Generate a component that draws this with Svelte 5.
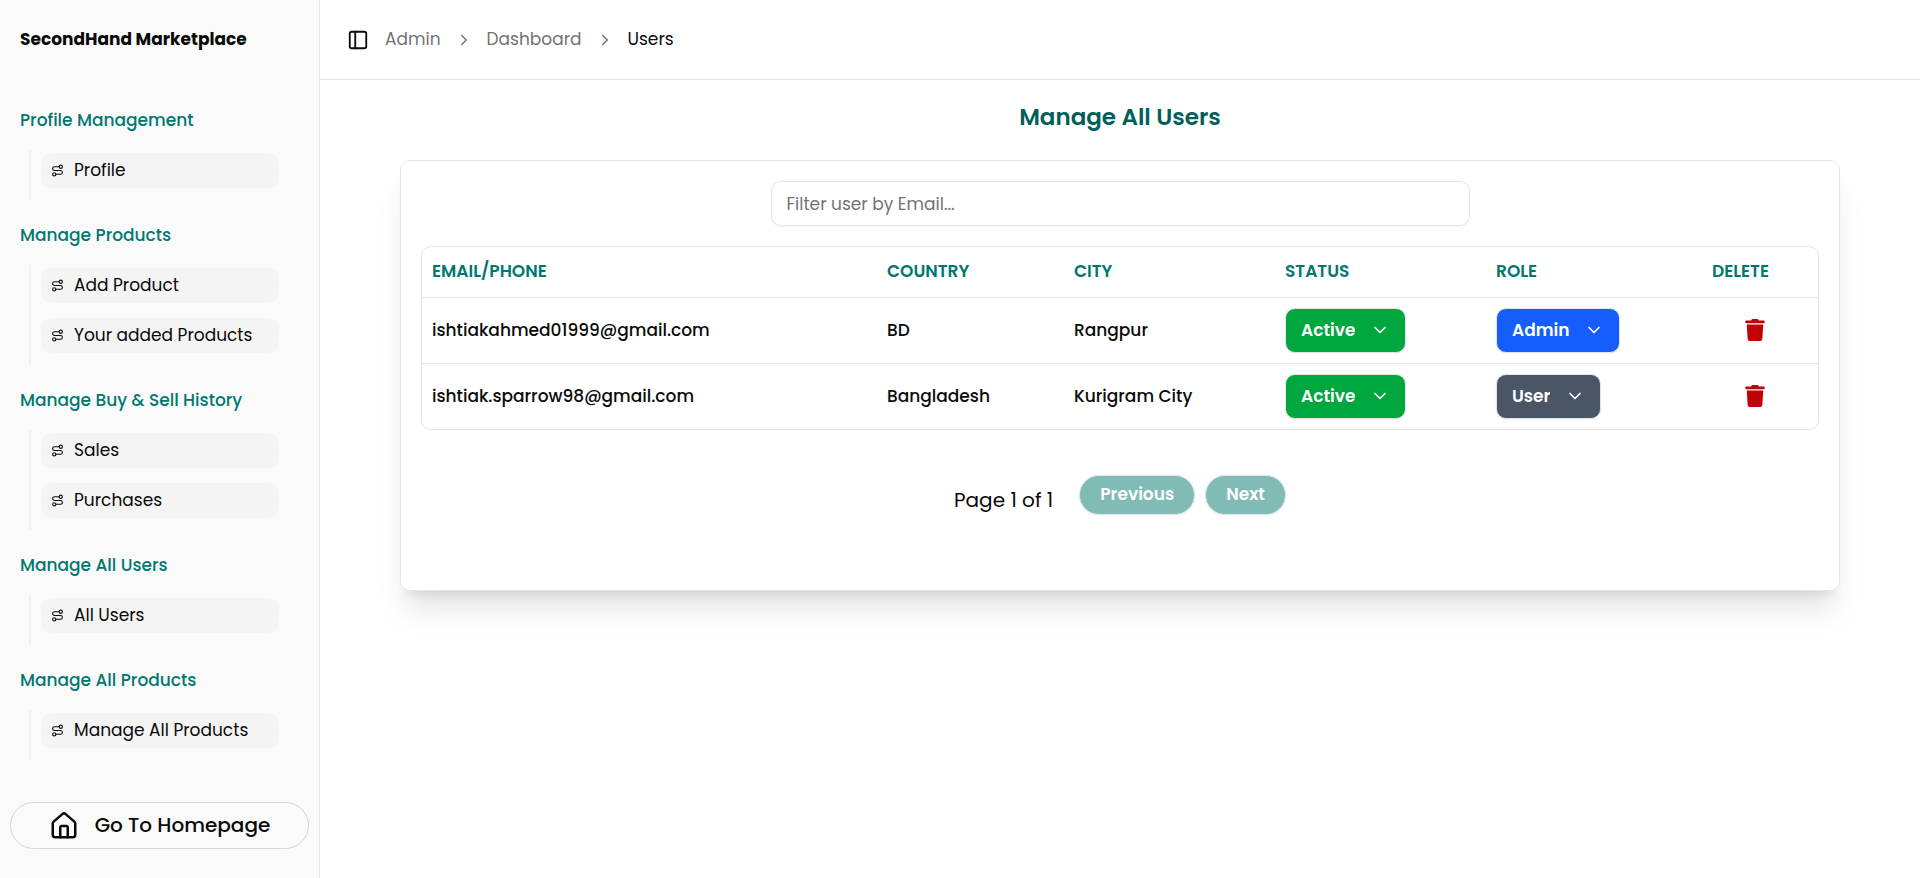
<script>
  const groups = [
    { title: 'Profile Management', items: ['Profile'] },
    { title: 'Manage Products', items: ['Add Product', 'Your added Products'] },
    { title: 'Manage Buy & Sell History', items: ['Sales', 'Purchases'] },
    { title: 'Manage All Users', items: ['All Users'] },
    { title: 'Manage All Products', items: ['Manage All Products'] }
  ];

  let users = $state([
    { email: 'ishtiakahmed01999@gmail.com', country: 'BD', city: 'Rangpur', status: 'Active', role: 'Admin' },
    { email: 'ishtiak.sparrow98@gmail.com', country: 'Bangladesh', city: 'Kurigram City', status: 'Active', role: 'User' }
  ]);
  let filter = $state('');
  let shown = $derived(users.filter((u) => u.email.includes(filter)));
</script>

{#snippet chevron()}
  <svg class="chevron" viewBox="0 0 24 24" aria-hidden="true"><path d="m6 9 6 6 6-6" /></svg>
{/snippet}

{#snippet separator()}
  <svg class="separator" viewBox="0 0 24 24" aria-hidden="true"><path d="m9 18 6-6-6-6" /></svg>
{/snippet}

<div class="layout">
  <aside>
    <a class="brand" href="#home">SecondHand Marketplace</a>
    <nav class="menu" aria-label="Sidebar">
      {#each groups as group}
        <section>
          <h2>{group.title}</h2>
          <ul>
            {#each group.items as item}
              <li>
                <a href="#{item}">
                  <svg viewBox="0 0 24 24" aria-hidden="true">
                    <circle cx="6" cy="19" r="3" />
                    <path d="M9 19h8.5a3.5 3.5 0 0 0 0-7h-11a3.5 3.5 0 0 1 0-7H15" />
                    <circle cx="18" cy="5" r="3" />
                  </svg>
                  {item}
                </a>
              </li>
            {/each}
          </ul>
        </section>
      {/each}
    </nav>
    <a class="home" href="#home">
      <svg viewBox="0 0 24 24" aria-hidden="true">
        <path d="M15 21v-8a1 1 0 0 0-1-1h-4a1 1 0 0 0-1 1v8" />
        <path d="M3 10a2 2 0 0 1 .709-1.528l7-5.999a2 2 0 0 1 2.582 0l7 5.999A2 2 0 0 1 21 10v9a2 2 0 0 1-2 2H5a2 2 0 0 1-2-2z" />
      </svg>
      Go To Homepage
    </a>
  </aside>

  <div class="page">
    <header>
      <button class="toggle" aria-label="Toggle sidebar">
        <svg viewBox="0 0 24 24" aria-hidden="true">
          <rect x="3" y="3" width="18" height="18" rx="2" />
          <path d="M9 3v18" />
        </svg>
      </button>
      <nav class="crumbs" aria-label="Breadcrumb">
        <a href="#admin">Admin</a>
        {@render separator()}
        <a href="#dashboard">Dashboard</a>
        {@render separator()}
        <span aria-current="page">Users</span>
      </nav>
    </header>

    <main>
      <h1>Manage All Users</h1>
      <div class="card">
        <input type="text" placeholder="Filter user by Email..." aria-label="Filter user by Email" bind:value={filter} />
        <div class="frame">
          <table>
            <thead>
              <tr>
                <th class="email">EMAIL/PHONE</th>
                <th class="country">COUNTRY</th>
                <th class="city">CITY</th>
                <th class="status">STATUS</th>
                <th class="role">ROLE</th>
                <th class="delete">DELETE</th>
              </tr>
            </thead>
            <tbody>
              {#each shown as user}
                <tr>
                  <td>{user.email}</td>
                  <td>{user.country}</td>
                  <td>{user.city}</td>
                  <td>
                    <div class="pick">
                      <select class="green" aria-label="Status" bind:value={user.status}>
                        <option>Active</option>
                        <option>Blocked</option>
                      </select>
                      {@render chevron()}
                    </div>
                  </td>
                  <td>
                    <div class="pick">
                      <select class={user.role === 'Admin' ? 'blue' : 'slate'} aria-label="Role" bind:value={user.role}>
                        <option>Admin</option>
                        <option>User</option>
                      </select>
                      {@render chevron()}
                    </div>
                  </td>
                  <td class="remove">
                    <button aria-label="Delete user">
                      <svg viewBox="0 0 448 512" aria-hidden="true">
                        <path d="M432 32H312l-9.4-18.7A24 24 0 0 0 281.1 0H166.8a23.72 23.72 0 0 0-21.4 13.3L136 32H16A16 16 0 0 0 0 48v32a16 16 0 0 0 16 16h416a16 16 0 0 0 16-16V48a16 16 0 0 0-16-16zM53.2 467a48 48 0 0 0 47.9 45h245.8a48 48 0 0 0 47.9-45L416 128H32z" />
                      </svg>
                    </button>
                  </td>
                </tr>
              {/each}
            </tbody>
          </table>
        </div>
        <div class="pager">
          <span>Page 1 of 1</span>
          <button disabled>Previous</button>
          <button disabled>Next</button>
        </div>
      </div>
    </main>
  </div>
</div>

<style>
  :global(body) {
    background: #fff;
  }

  .layout {
    display: flex;
    min-height: 100vh;
    font-family: Poppins, Inter, sans-serif;
    font-size: 17px;
    line-height: 25px;
    color: #0a0a0a;
  }

  .layout * {
    box-sizing: border-box;
  }

  a {
    color: inherit;
    text-decoration: none;
  }

  button,
  input,
  select {
    font: inherit;
  }

  svg {
    flex: none;
    fill: none;
    stroke: currentColor;
    stroke-width: 2;
    stroke-linecap: round;
    stroke-linejoin: round;
  }

  aside {
    display: flex;
    flex: none;
    flex-direction: column;
    width: 320px;
    padding: 0 10px 29px;
    border-right: 1px solid #e5e5e5;
    background: #fafafa;
  }

  .brand {
    padding: 27px 10px 48px;
    font-weight: 700;
  }

  .menu {
    display: flex;
    flex-direction: column;
    gap: 15px;
    padding: 0 10px;
  }

  h2 {
    margin: 0 0 10px;
    font-size: 17px;
    font-weight: 500;
    line-height: 40px;
    color: #00786f;
  }

  ul {
    margin: 0 20px 0 9px;
    padding: 0 0 0 10px;
    border-left: 2px solid #f0f0f0;
    list-style: none;
  }

  li {
    padding: 3px 0 12px;
  }

  li a {
    display: flex;
    align-items: center;
    gap: 10px;
    height: 35px;
    padding: 0 10px;
    border-radius: 10px;
    background: #f4f4f4;
    white-space: nowrap;
  }

  li svg {
    width: 13px;
    height: 13px;
  }

  .home {
    display: flex;
    align-items: center;
    justify-content: center;
    gap: 16px;
    height: 47px;
    margin-top: auto;
    border: 1px solid #d4d4d4;
    border-radius: 24px;
    font-size: 20px;
    font-weight: 500;
  }

  .home svg {
    width: 30px;
    height: 30px;
  }

  .page {
    flex: 1;
    min-width: 0;
  }

  header {
    display: flex;
    align-items: center;
    gap: 16px;
    height: 80px;
    padding: 0 27px;
    border-bottom: 1px solid #e5e5e5;
  }

  .toggle {
    display: flex;
    padding: 0;
    border: 0;
    background: none;
    color: inherit;
  }

  .toggle svg {
    width: 22px;
    height: 22px;
  }

  .crumbs {
    display: flex;
    align-items: center;
    gap: 14px;
    color: #737373;
  }

  .crumbs span {
    color: #0a0a0a;
  }

  .separator {
    width: 18px;
    height: 18px;
  }

  main {
    padding: 20px 80px;
  }

  h1 {
    margin: 0 0 25px;
    font-size: 23px;
    font-weight: 600;
    line-height: 35px;
    text-align: center;
    color: #005f5a;
  }

  .card {
    padding: 20px 20px 75px;
    border: 1px solid #e5e5e5;
    border-radius: 10px;
    box-shadow:
      0 25px 31px -6px rgba(0, 0, 0, 0.1),
      0 10px 12px -7px rgba(0, 0, 0, 0.1);
  }

  input {
    display: block;
    width: 50%;
    height: 45px;
    margin: 0 auto 20px;
    padding: 0 15px;
    border: 1px solid #e5e5e5;
    border-radius: 10px;
    background: #fff;
    box-shadow: 0 1px 2px rgba(0, 0, 0, 0.05);
    color: inherit;
  }

  input::placeholder {
    color: #737373;
  }

  .frame {
    border: 1px solid #e5e5e5;
    border-radius: 10px;
    overflow: hidden;
  }

  table {
    width: 100%;
    border-spacing: 0;
    table-layout: fixed;
  }

  th,
  td {
    padding: 0 10px;
    border-bottom: 1px solid #e5e5e5;
    text-align: left;
    white-space: nowrap;
  }

  th {
    height: 51px;
    padding-bottom: 2px;
    font-weight: 600;
    color: #00786f;
  }

  td {
    height: 66px;
    font-weight: 500;
  }

  tbody tr:last-child td {
    height: 65px;
    border-bottom: 0;
  }

  .email {
    width: 455px;
  }

  .country {
    width: 187px;
  }

  .city {
    width: 211px;
  }

  .status {
    width: 211px;
  }

  .role {
    width: 216px;
  }

  .pick {
    display: inline-flex;
    position: relative;
    vertical-align: middle;
    color: #fff;
  }

  .pick select {
    height: 45px;
    padding: 0 50px 0 15px;
    border: 1px solid #e5e5e5;
    border-radius: 10px;
    box-shadow: 0 1px 2px rgba(0, 0, 0, 0.05);
    appearance: none;
    field-sizing: content;
    font-weight: 600;
    color: inherit;
  }

  .pick .green {
    background: #00a63e;
  }

  .pick .blue {
    background: #155dfc;
  }

  .pick .slate {
    background: #4a5565;
  }

  .chevron {
    position: absolute;
    top: 12px;
    right: 16px;
    width: 20px;
    height: 20px;
    pointer-events: none;
  }

  .remove {
    padding: 0 21px 2px 10px;
    text-align: center;
  }

  .remove button {
    padding: 0;
    border: 0;
    background: none;
    color: #c10007;
    vertical-align: middle;
  }

  .remove svg {
    display: block;
    width: 20px;
    height: 22px;
    fill: currentColor;
    stroke: none;
  }

  .pager {
    display: flex;
    justify-content: center;
    gap: 10px;
    padding-top: 45px;
  }

  .pager span {
    padding: 13px 16px 0 0;
    font-size: 20px;
  }

  .pager button {
    height: 40px;
    padding: 0 20px 2px;
    border: 1px solid #e5e5e5;
    border-radius: 20px;
    background: #80bbb6;
    box-shadow: 0 1px 2px rgba(0, 0, 0, 0.05);
    font-weight: 600;
    color: #fff;
  }
</style>
